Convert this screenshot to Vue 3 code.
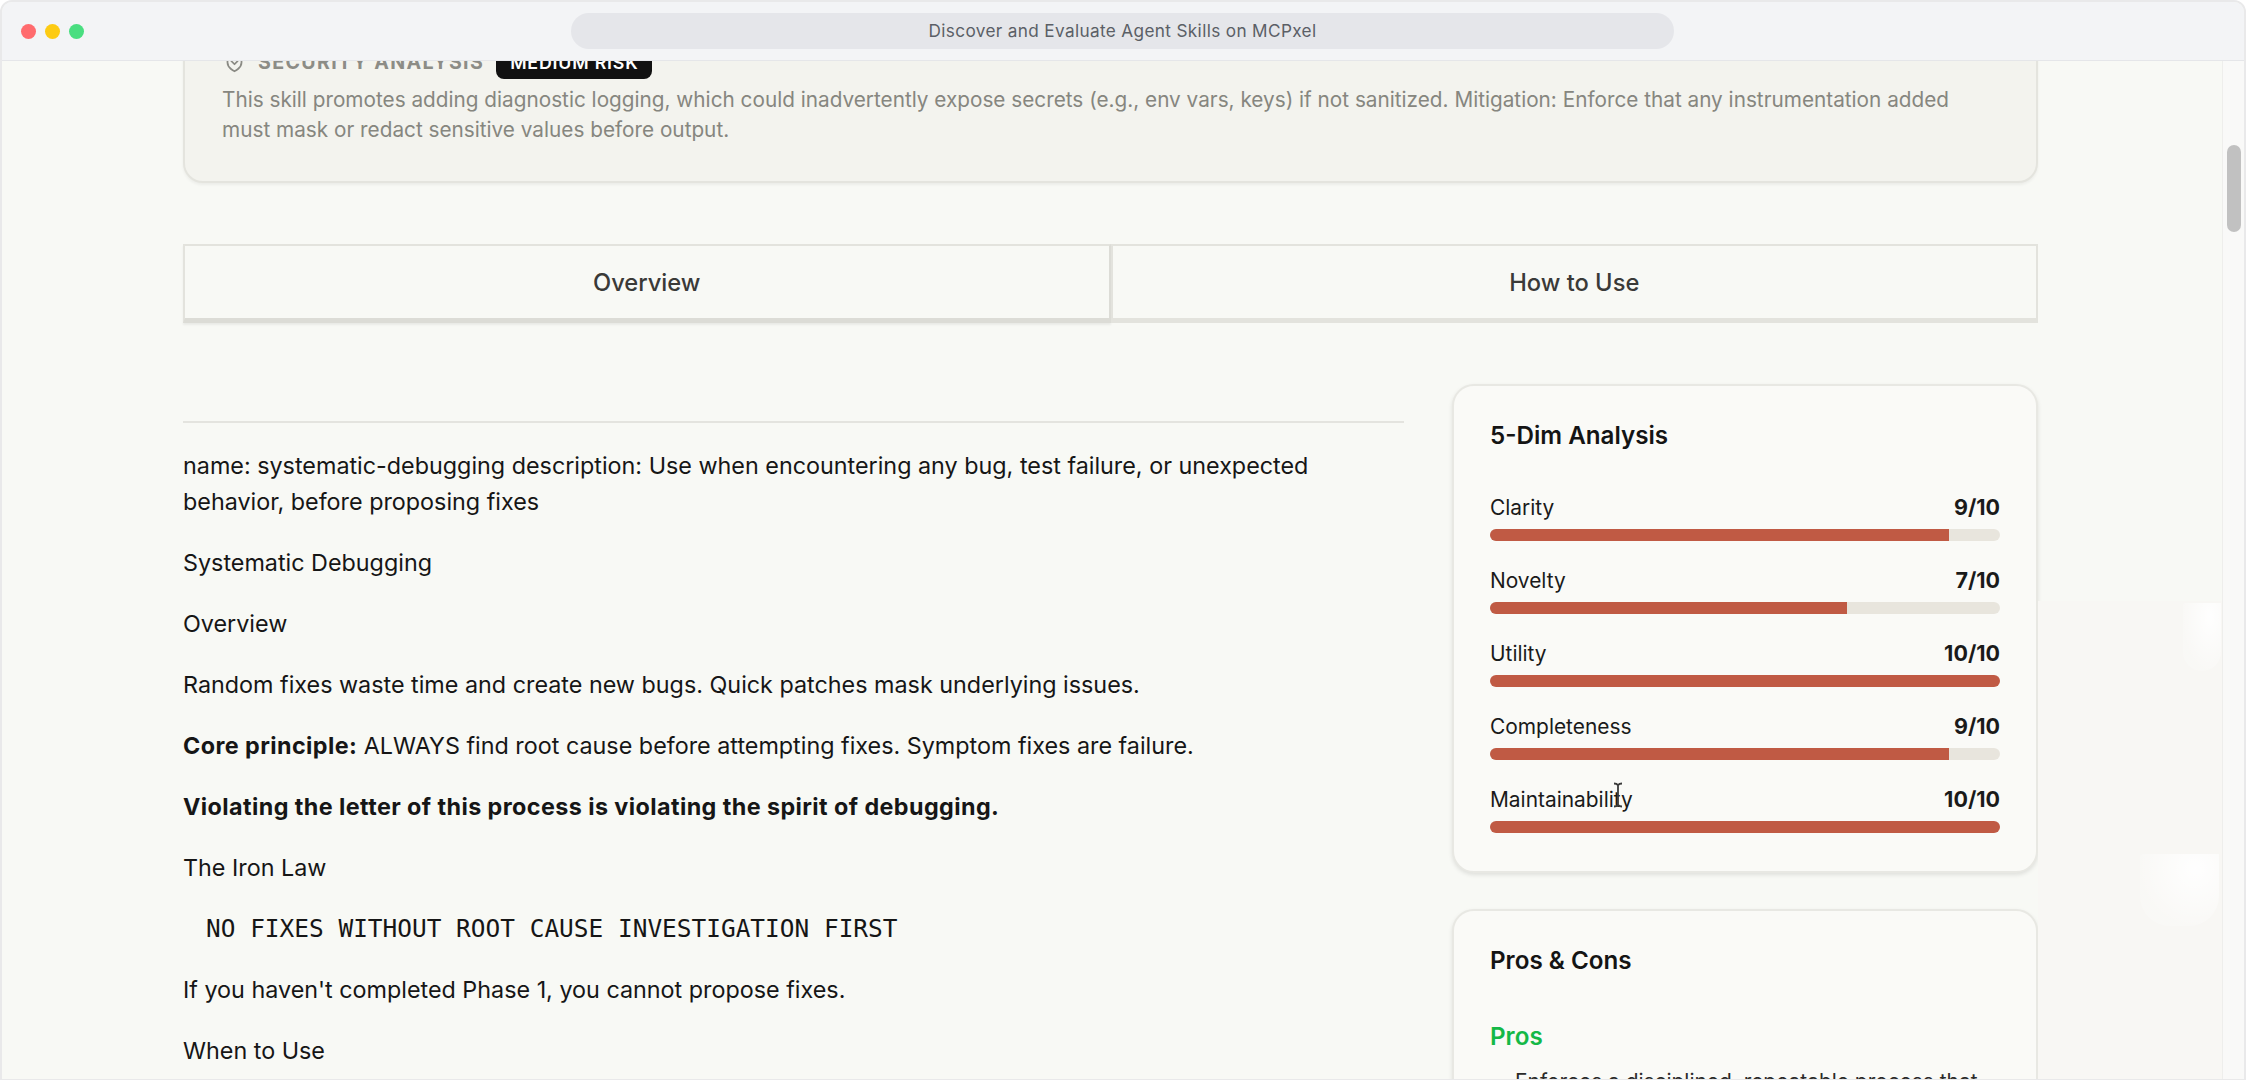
<script setup>
const dims = [
  { name: 'Clarity', score: 9 },
  { name: 'Novelty', score: 7 },
  { name: 'Utility', score: 10 },
  { name: 'Completeness', score: 9 },
  { name: 'Maintainability', score: 10 },
]
</script>

<template>
  <div class="window">
    <header class="titlebar">
      <div class="lights">
        <span class="light red"></span>
        <span class="light yellow"></span>
        <span class="light green"></span>
      </div>
      <div class="address">Discover and Evaluate Agent Skills on MCPxel</div>
    </header>

    <div class="viewport">
      <div class="page">
        <section class="security">
          <div class="sec-head">
            <svg class="shield" viewBox="0 0 24 24" fill="none" stroke="currentColor" stroke-width="2" stroke-linecap="round" stroke-linejoin="round">
              <path d="M12 22s8-3.5 8-10V5l-8-3-8 3v7c0 6.500 8 10 8 10z" />
              <path d="M8.500 10.500 12 14l3.500-3.500" />
            </svg>
            <span class="sec-title">SECURITY ANALYSIS</span>
            <span class="badge">MEDIUM RISK</span>
          </div>
          <p class="sec-text">This skill promotes adding diagnostic logging, which could inadvertently expose secrets (e.g., env vars, keys) if not sanitized. Mitigation: Enforce that any instrumentation added must mask or redact sensitive values before output.</p>
        </section>

        <nav class="tabs">
          <button class="tab active">Overview</button>
          <button class="tab">How to Use</button>
        </nav>

        <div class="columns">
          <main class="article">
            <hr class="rule" />
            <p>name: systematic-debugging description: Use when encountering any bug, test failure, or unexpected behavior, before proposing fixes</p>
            <p>Systematic Debugging</p>
            <p>Overview</p>
            <p>Random fixes waste time and create new bugs. Quick patches mask underlying issues.</p>
            <p><strong>Core principle:</strong> ALWAYS find root cause before attempting fixes. Symptom fixes are failure.</p>
            <p><strong>Violating the letter of this process is violating the spirit of debugging.</strong></p>
            <p>The Iron Law</p>
            <pre class="code">NO FIXES WITHOUT ROOT CAUSE INVESTIGATION FIRST</pre>
            <p>If you haven't completed Phase 1, you cannot propose fixes.</p>
            <p>When to Use</p>
          </main>

          <aside class="side">
            <section class="card">
              <h3 class="card-title">5-Dim Analysis</h3>
              <div class="dims">
                <div v-for="d in dims" :key="d.name" class="dim">
                  <div class="dim-row">
                    <span>{{ d.name }}</span>
                    <b>{{ d.score }}/10</b>
                  </div>
                  <div class="track">
                    <div class="fill" :style="{ width: d.score * 10 + '%' }"></div>
                  </div>
                </div>
              </div>
            </section>

            <section class="card pros-card">
              <h3 class="card-title">Pros &amp; Cons</h3>
              <h4 class="pros">Pros</h4>
              <ul class="pros-list">
                <li>Enforces a disciplined, repeatable process that</li>
              </ul>
            </section>
          </aside>
        </div>
      </div>

      <div class="tone"></div>
      <div class="blob blob-a"></div>
      <div class="blob blob-b"></div>

      <div class="scrollbar"><div class="thumb"></div></div>

      <svg class="cursor" viewBox="0 0 12 26" fill="none" stroke="#3a3a3a" stroke-width="1.800">
        <path d="M2 1.500c2 0 3.200.6 4 1.600.8-1 2-1.600 4-1.600M6 3v20M2 24.500c2 0 3.200-.6 4-1.600.8 1 2 1.600 4 1.600" />
      </svg>
    </div>
  </div>
</template>

<style>
html, body { margin: 0; background: #fff; }
</style>

<style scoped>
.window {
  position: relative;
  width: 2246px;
  height: 1080px;
  box-sizing: border-box;
  display: flex;
  flex-direction: column;
  overflow: hidden;
  border: 2px solid #e9e9ea;
  border-bottom-width: 1px;
  border-radius: 12px 12px 0 0;
  background: #f8f9f5;
  font-family: Inter, "Liberation Sans", sans-serif;
  color: #1a1a1a;
}
.titlebar {
  flex: none;
  height: 59px;
  box-sizing: border-box;
  display: flex;
  align-items: center;
  background: #f3f4f6;
  border-bottom: 1px solid #e5e6e9;
  padding-left: 19px;
}
.lights { display: flex; gap: 9px; width: 550px; flex: none; }
.light { width: 15px; height: 15px; border-radius: 50%; }
.red { background: #ff6b6e; }
.yellow { background: #fdcb13; }
.green { background: #49de80; }
.address {
  width: 1103px;
  height: 36px;
  border-radius: 18px;
  background: #e5e6ea;
  display: flex;
  align-items: center;
  justify-content: center;
  font-size: 17.200px;
  letter-spacing: 0.35px;
  color: #5b5f66;
  padding-bottom: 1px;
  box-sizing: border-box;
}
.viewport {
  position: relative;
  flex: 1;
  overflow: hidden;
}
.page {
  width: 1855px;
  margin: -54px 0 0 181px;
}
.security {
  box-sizing: border-box;
  height: 176px;
  padding: 37px 37px 0;
  border: 2px solid #e4e4de;
  border-radius: 20px;
  background: #f3f3ee;
  box-shadow: 0 2px 3px rgba(0, 0, 0, 0.05);
}
.sec-head { display: flex; align-items: center; height: 34px; margin-top: -1px; }
.shield { width: 21px; height: 21px; color: #8a8a84; margin-left: 2px; }
.sec-title {
  margin-left: 13px;
  font-size: 19.600px;
  font-weight: 700;
  letter-spacing: 1.350px;
  color: #8c8c86;
}
.badge {
  margin-left: 12px;
  height: 34px;
  box-sizing: border-box;
  padding: 0 14px;
  display: flex;
  align-items: center;
  border-radius: 8px;
  background: #111;
  color: #fff;
  font-size: 17.800px;
  font-weight: 600;
  letter-spacing: 0.8px;
}
.sec-text {
  margin: 6px 0 0;
  font-size: 20.750px;
  line-height: 30px;
  color: #86867f;
}
.tabs {
  display: flex;
  margin-top: 61px;
}
.tab {
  flex: 1;
  height: 79px;
  box-sizing: border-box;
  border: 2px solid #e3e3dd;
  border-bottom-width: 5px;
  background: #f8f9f5;
  padding: 0;
  font-family: inherit;
  font-size: 23.700px;
  font-weight: 500;
  color: #3a3a38;
}
.tab.active {
  border-bottom-color: #dcdcd6;
  border-right-color: #dcdcd6;
  box-shadow: 0 2px 2px rgba(0, 0, 0, 0.06);
}
.columns {
  display: flex;
  justify-content: space-between;
  align-items: flex-start;
  margin-top: 61px;
}
.article {
  width: 1221px;
  font-size: 23.330px;
  line-height: 36px;
  color: #161616;
}
.rule {
  margin: 37px 0 0;
  border: 0;
  height: 2px;
  background: #e4e4df;
}
.article p { margin: 25px 0; }
.article strong { font-weight: 700; letter-spacing: 0.42px; }
.code {
  margin: 25px 0;
  padding-left: 23px;
  font-family: "DejaVu Sans Mono", "Liberation Mono", monospace;
  font-size: 24.450px;
  line-height: 36px;
}
.side { width: 586px; flex: none; display: flex; flex-direction: column; gap: 36px; }
.card {
  box-sizing: border-box;
  padding: 32px 36px 0;
  border: 2px solid #e8e8e3;
  border-radius: 22px;
  background: #fafaf7;
  box-shadow: 0 2px 4px rgba(0, 0, 0, 0.1);
}
.card-title {
  margin: 0;
  font-size: 24.200px;
  line-height: 36px;
  font-weight: 600;
  color: #141414;
}
.dims { margin-top: 36px; padding-bottom: 38px; display: flex; flex-direction: column; gap: 22px; }
.dim-row {
  display: flex;
  justify-content: space-between;
  height: 34px;
  align-items: center;
  font-size: 20.900px;
  margin-bottom: 5px;
}
.dim-row b { font-weight: 700; font-size: 21.500px; }
.track { height: 12px; border-radius: 6px; background: #e8e5dd; overflow: hidden; }
.fill { height: 100%; background: #c05a44; }
.pros-card { height: 300px; }
.pros {
  margin: 40px 0 0;
  font-size: 24.200px;
  line-height: 36px;
  font-weight: 600;
  color: #14b847;
}
.pros-list {
  margin: 12px 0 0;
  padding-left: 25px;
  font-size: 20.900px;
  line-height: 30px;
  color: #2a2a2a;
}
.tone {
  position: absolute;
  left: 2036px;
  right: 22px;
  top: 540px;
  bottom: 0;
  background: #f8f7f4;
}
.blob {
  position: absolute;
  background: radial-gradient(ellipse at 70% 20%, rgba(255, 255, 255, 0.95), rgba(255, 255, 255, 0.2) 70%);
  border-radius: 4px 0 30px 30px;
}
.blob-a { left: 2181px; top: 542px; width: 38px; height: 68px; }
.blob-b { left: 2138px; top: 793px; width: 79px; height: 72px; }
.scrollbar {
  position: absolute;
  top: 0;
  right: 0;
  bottom: 0;
  width: 22px;
  background: #f9f9f8;
  border-left: 1px solid #eeeeec;
  box-sizing: border-box;
}
.thumb {
  position: absolute;
  left: 4px;
  right: 3px;
  top: 84px;
  height: 87px;
  border-radius: 7px;
  background: #c1c1c1;
}
.cursor {
  position: absolute;
  left: 1610px;
  top: 721px;
  width: 12px;
  height: 26px;
}
</style>
